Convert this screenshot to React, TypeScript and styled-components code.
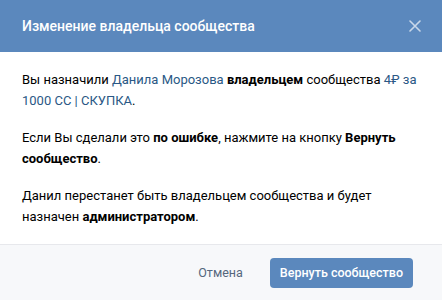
import { createGlobalStyle } from "styled-components"
import styled from "styled-components"

const GlobalStyle = createGlobalStyle`
  html, body {
    margin: 0;
    padding: 0;
    background: #ffffff;
  }
  body {
    font-family: Roboto, "Open Sans", "Liberation Sans", sans-serif;
    -webkit-font-smoothing: antialiased;
  }
`

const Box = styled.div`
  width: 442px;
  height: 300px;
  display: flex;
  flex-direction: column;
  background: #ffffff;
  overflow: hidden;
`

const Header = styled.div`
  height: 52px;
  flex: 0 0 52px;
  display: flex;
  align-items: center;
  justify-content: space-between;
  padding: 0 19px 0 22px;
  box-sizing: border-box;
  background: #5b88bd;
`

const Title = styled.div`
  color: #ffffff;
  font-size: 14px;
  font-weight: 500;
`

const CloseButton = styled.button`
  width: 16px;
  height: 16px;
  padding: 0;
  border: 0;
  background: transparent;
  display: flex;
  align-items: center;
  justify-content: center;
  cursor: pointer;
`

const Body = styled.div`
  flex: 1;
  padding: 17px 22px 0 22px;
  font-size: 13px;
  line-height: 21px;
  color: #000000;
`

const Paragraph = styled.p`
  margin: 0 0 16px 0;
`

const Link = styled.a`
  color: #2a5885;
  text-decoration: none;
`

const Strong = styled.b`
  font-weight: 700;
`

const Footer = styled.div`
  height: 56px;
  flex: 0 0 56px;
  box-sizing: border-box;
  border-top: 1px solid #e7e8ec;
  background: #f7f8fa;
  display: flex;
  align-items: center;
  justify-content: flex-end;
  gap: 27px;
  padding: 0 29px 0 0;
`

const Button = styled.button<{ $primary?: boolean }>`
  height: 30px;
  border: 0;
  border-radius: 4px;
  padding: 0 ${(p) => (p.$primary ? "10px" : "0")};
  font-family: inherit;
  font-size: 12.5px;
  font-weight: ${(p) => (p.$primary ? 500 : 400)};
  color: ${(p) => (p.$primary ? "#ffffff" : "#55677d")};
  background: ${(p) => (p.$primary ? "#5b88bd" : "transparent")};
  cursor: pointer;
`

function CloseIcon() {
  return (
    <svg width="12" height="12" viewBox="0 0 12 12">
      <path d="M1 1 L11 11 M11 1 L1 11" stroke="#c9d7e9" strokeWidth="1.6" strokeLinecap="round" />
    </svg>
  )
}

export default function App() {
  return (
    <>
      <GlobalStyle />
      <Box>
        <Header>
          <Title>Изменение владельца сообщества</Title>
          <CloseButton>
            <CloseIcon />
          </CloseButton>
        </Header>
        <Body>
          <Paragraph>
            Вы назначили <Link href="#">Данила Морозова</Link> <Strong>владельцем</Strong> сообщества{" "}
            <Link href="#">4₽ за 1000 СС | СКУПКА</Link>.
          </Paragraph>
          <Paragraph>
            Если Вы сделали это <Strong>по ошибке</Strong>, нажмите на кнопку <Strong>Вернуть сообщество</Strong>.
          </Paragraph>
          <Paragraph>
            Данил перестанет быть владельцем сообщества и будет назначен <Strong>администратором</Strong>.
          </Paragraph>
        </Body>
        <Footer>
          <Button>Отмена</Button>
          <Button $primary>Вернуть сообщество</Button>
        </Footer>
      </Box>
    </>
  )
}
